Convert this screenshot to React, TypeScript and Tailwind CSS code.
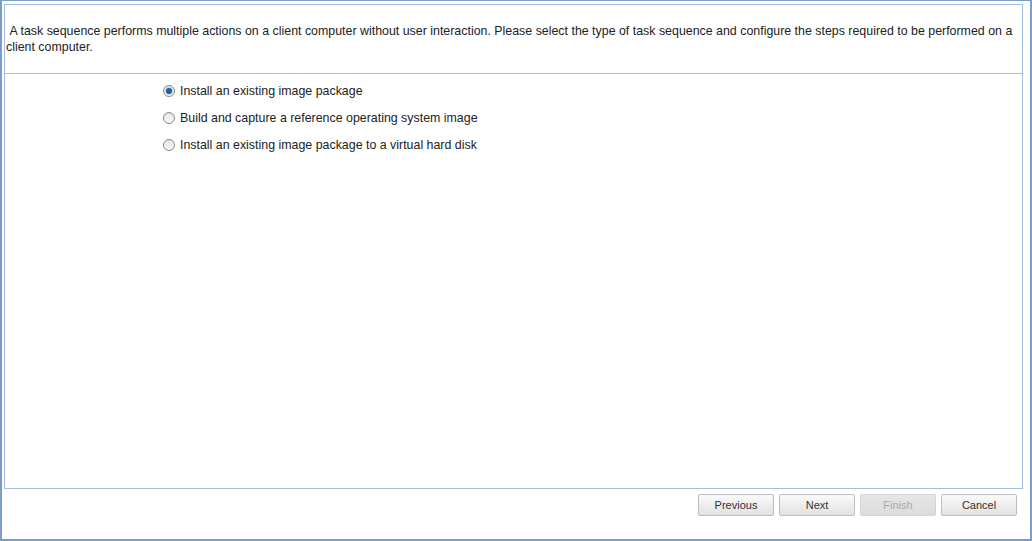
import React, { useState } from 'react';

const OPTIONS = [
  'Install an existing image package',
  'Build and capture a reference operating system image',
  'Install an existing image package to a virtual hard disk',
];

function Radio({ checked }: { checked: boolean }) {
  return (
    <span className="relative w-[12px] h-[12px] rounded-full border border-[#8a8a8a] bg-gradient-to-b from-[#e6e6e6] to-[#f8f8f8] flex items-center justify-center shrink-0">
      {checked && <span className="w-[6px] h-[6px] rounded-full bg-[#1f5fa8] shadow-[0_0_2px_#6aa0dd]" />}
    </span>
  );
}

function WizButton({ label, disabled }: { label: string; disabled?: boolean }) {
  return (
    <button
      type="button"
      className={`w-[76px] h-[22px] rounded-[2px] border text-[11px] leading-none bg-gradient-to-b ${
        disabled
          ? 'border-[#d4d4d4] from-[#e6e6e6] to-[#dcdcdc] text-[#a8a8a8]'
          : 'border-[#bdbdbd] from-[#fafafa] to-[#e2e2e2] text-[#333]'
      }`}
    >
      {label}
    </button>
  );
}

export default function App() {
  const [selected, setSelected] = useState(0);

  return (
    <div
      className="w-[1032px] h-[541px] bg-white border-l-2 border-r-2 border-b-2 border-t border-[#7d9bcb] flex flex-col pl-[2px] pt-[3px] pr-[7px] text-[#222]"
      style={{ fontFamily: '"Liberation Sans", Arial, sans-serif' }}
    >
      <div className="flex-1 border border-[#a3bde3] flex flex-col">
        <div className="h-[69px] border-b border-[#a3bde3] pl-[1px] pt-[18px] text-[12.4px] leading-[16px]">
          &nbsp;A task sequence performs multiple actions on a client computer without user interaction. Please select the type of task sequence and configure the steps required to be performed on a client computer.
        </div>
        <div className="flex-1 pl-[158px] pt-[9px] flex flex-col gap-[11px]">
          {OPTIONS.map((opt, i) => (
            <label
              key={opt}
              onClick={() => setSelected(i)}
              className="flex items-center gap-[5px] h-[16px] text-[12.4px] cursor-pointer"
            >
              <Radio checked={selected === i} />
              <span>{opt}</span>
            </label>
          ))}
        </div>
      </div>
      <div className="h-[50px] flex justify-end items-start pt-[5px] pr-[6px] gap-[5px]">
        <WizButton label="Previous" />
        <WizButton label="Next" />
        <WizButton label="Finish" disabled />
        <WizButton label="Cancel" />
      </div>
    </div>
  );
}
